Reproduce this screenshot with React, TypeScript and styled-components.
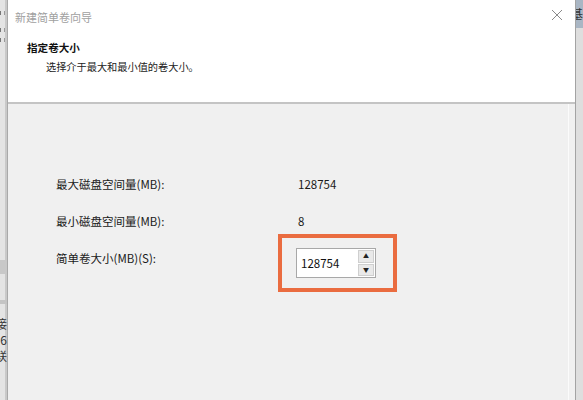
import React from "react";
import styled, { createGlobalStyle } from "styled-components";

const Global = createGlobalStyle`
  html, body { margin: 0; padding: 0; background: #e8e8e8; }
  body { font-family: "Noto Sans CJK SC", "Noto Sans", sans-serif; }
`;

const Page = styled.div`
  width: 583px;
  height: 400px;
  display: flex;
  overflow: hidden;
`;

const SideStrip = styled.div<{ $side: "left" | "right" }>`
  width: 7px;
  flex: none;
  display: flex;
  flex-direction: column;
  overflow: hidden;
  background: #e4e4e4;
  box-shadow: ${(p) => (p.$side === "left" ? "inset -2px 0 0 #c9c9c9" : "inset 2px 0 0 #bdbdbd")};
`;

const StripBlock = styled.div<{ $h: number; $bg?: string }>`
  height: ${(p) => p.$h}px;
  flex: none;
  background: ${(p) => p.$bg || "transparent"};
  display: flex;
  justify-content: flex-end;
  align-items: center;
  overflow: hidden;
  font-size: 12px;
  line-height: 14px;
  color: #333;
  white-space: nowrap;
`;

const StripMark = styled.div<{ $h: number }>`
  height: ${(p) => p.$h}px;
  flex: none;
  display: flex;
  justify-content: flex-end;
  align-items: center;
  &::after {
    content: "";
    width: 3px;
    height: 4px;
    margin-right: 2px;
    border-left: 1px solid #777;
    border-right: 1px solid #999;
  }
`;

const Window = styled.div`
  flex: 1;
  display: flex;
  flex-direction: column;
  border-left: 1px solid #a9a9a9;
  border-right: 1px solid #a3a3a3;
  min-width: 0;
`;

const Header = styled.div`
  height: 102px;
  background: #ffffff;
  border-bottom: 2px solid #c4c4c4;
  display: flex;
  flex-direction: column;
  flex: none;
`;

const TitleBar = styled.div`
  height: 33px;
  display: flex;
  align-items: center;
  justify-content: space-between;
  padding: 0 12px 0 7px;
`;

const Title = styled.span`
  font-size: 11px;
  color: #a0a0a0;
`;

const CloseIcon = styled.svg`
  width: 12px;
  height: 12px;
  margin-top: -3px;
`;

const HeadText = styled.div`
  padding: 7px 0 0 19px;
  display: flex;
  flex-direction: column;
  gap: 4px;
`;

const Heading = styled.div`
  font-size: 10.6px;
  font-weight: bold;
  color: #111;
  line-height: 15px;
`;

const SubHeading = styled.div`
  font-size: 10.2px;
  color: #222;
  line-height: 15px;
  padding-left: 19px;
`;

const Body = styled.div`
  flex: 1;
  background: #f0f0f0;
  padding: 61px 0 0 48px;
  box-shadow: inset -6px 0 0 #f0f0f0, inset -7px 0 0 #fbfbfb;
`;

const Form = styled.div`
  display: grid;
  grid-template-columns: 242px auto;
  grid-template-rows: 37px 37px 38px;
  align-items: center;
  justify-items: start;
`;

const Label = styled.div`
  font-size: 11.5px;
  color: #1a1a1a;
`;

const Value = styled.div`
  font-size: 11.5px;
  color: #1a1a1a;
`;

const Highlight = styled.div`
  width: 119px;
  height: 58px;
  margin: 10px 0 0 -20px;
  border: 4px solid #ea6c40;
  box-sizing: border-box;
  display: flex;
  align-items: center;
  padding-left: 14px;
`;

const SpinBox = styled.div`
  width: 80px;
  height: 30px;
  box-sizing: border-box;
  border: 1px solid #a8a8a8;
  background: #fff;
  display: flex;
  align-items: stretch;
`;

const SpinText = styled.div`
  flex: 1;
  font-size: 11.5px;
  color: #111;
  display: flex;
  align-items: center;
  padding-left: 4px;
`;

const SpinButtons = styled.div`
  width: 16px;
  display: flex;
  flex-direction: column;
  padding: 1px 1px 1px 0;
  gap: 1px;
`;

const SpinButton = styled.div`
  flex: 1;
  background: #e9e9e9;
  border: 1px solid #cfcfcf;
  display: flex;
  align-items: center;
  justify-content: center;
  font-size: 6px;
  color: #222;
  line-height: 1;
`;

export default function App() {
  return (
    <>
      <Global />
      <Page>
        <SideStrip $side="left">
          <StripMark $h={26} />
          <StripMark $h={8} />
          <StripMark $h={12} />
          <StripBlock $h={214} />
          <StripBlock $h={14} $bg="#c8c8c8" />
          <StripBlock $h={26} />
          <StripBlock $h={4} $bg="#c4c4c4" />
          <StripBlock $h={12} />
          <StripBlock $h={16}>接</StripBlock>
          <StripBlock $h={16}>6</StripBlock>
          <StripBlock $h={16}>联</StripBlock>
          <StripBlock $h={36} />
        </SideStrip>
        <Window>
          <Header>
            <TitleBar>
              <Title>新建简单卷向导</Title>
              <CloseIcon viewBox="0 0 12 12">
                <path d="M1 1 L11 11 M11 1 L1 11" stroke="#8a8a8a" strokeWidth="1" fill="none" />
              </CloseIcon>
            </TitleBar>
            <HeadText>
              <Heading>指定卷大小</Heading>
              <SubHeading>选择介于最大和最小值的卷大小。</SubHeading>
            </HeadText>
          </Header>
          <Body>
            <Form>
              <Label>最大磁盘空间量(MB):</Label>
              <Value>128754</Value>
              <Label>最小磁盘空间量(MB):</Label>
              <Value>8</Value>
              <Label>简单卷大小(MB)(S):</Label>
              <Highlight>
                <SpinBox>
                  <SpinText>128754</SpinText>
                  <SpinButtons>
                    <SpinButton>▲</SpinButton>
                    <SpinButton>▼</SpinButton>
                  </SpinButtons>
                </SpinBox>
              </Highlight>
            </Form>
          </Body>
        </Window>
        <SideStrip $side="right">
          <StripBlock $h={28} $bg="#a9b6c4">基</StripBlock>
          <StripBlock $h={372} $bg="#dedede" />
        </SideStrip>
      </Page>
    </>
  );
}
